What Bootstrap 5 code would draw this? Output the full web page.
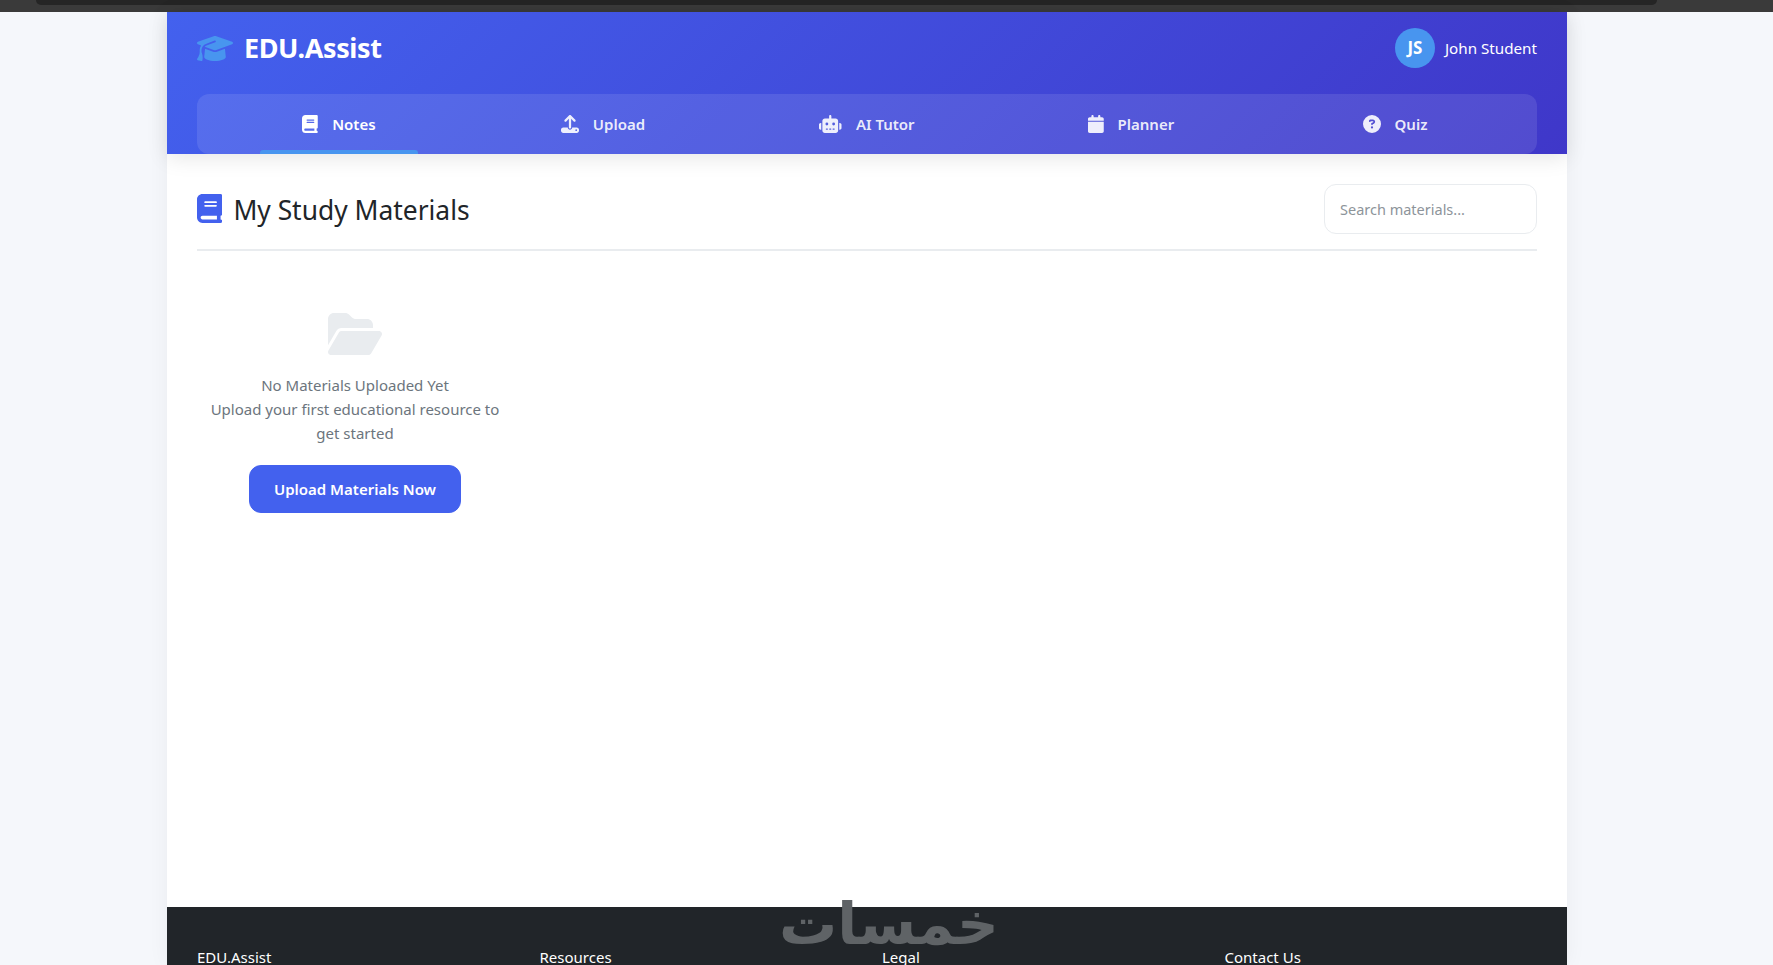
<!DOCTYPE html>
<html lang="en">
<head>
    <meta charset="utf-8">
    <title>EDU.Assist</title>
    <link href="https://cdn.jsdelivr.net/npm/bootstrap@5.3.0/dist/css/bootstrap.min.css" rel="stylesheet">
    <style>
        html, body {
            height: 965px;
            overflow: hidden;
        }

        body {
            background-color: #f5f7fb;
            color: #212529;
            font-family: "Noto Sans", "Open Sans", sans-serif;
        }

        .chrome-bar {
            height: 12px;
            background-color: #3a3a3a;
            padding: 0 116px 0 36px;
        }

        .chrome-tab {
            height: 5px;
            background-color: #252525;
            border-radius: 0 0 8px 8px;
        }

        .app-shell {
            width: 1400px;
            height: 953px;
            margin-left: 167px;
            background-color: #fff;
            box-shadow: 0 0 20px rgba(0, 0, 0, 0.05);
        }

        .app-header {
            height: 142px;
            padding: 16px 30px 0;
            color: #fff;
            background: linear-gradient(135deg, #4361ee, #3f37c9);
            box-shadow: 0 4px 20px rgba(0, 0, 0, 0.1);
            position: relative;
        }

        .brand-row {
            height: 66px;
        }

        .brand-block {
            gap: 11px;
        }

        .brand-icon {
            width: 36px;
            height: 29px;
            fill: #4895ef;
        }

        .brand-name {
            font-size: 27px;
            font-weight: 700;
            letter-spacing: -0.4px;
        }

        .user-block {
            gap: 10px;
        }

        .user-avatar {
            width: 40px;
            height: 40px;
            background-color: #4895ef;
            font-weight: 700;
            font-size: 17px;
        }

        .user-name {
            font-size: 15.2px;
            font-weight: 400;
        }

        .tab-strip {
            height: 60px;
            padding: 0 10px;
            background-color: rgba(255, 255, 255, 0.1);
            border-radius: 12px;
        }

        .tab-strip .nav-link {
            position: relative;
            gap: 14px;
            color: rgba(255, 255, 255, 0.9);
            font-size: 15px;
            font-weight: 600;
            padding: 0;
        }

        .tab-strip .nav-link.active {
            color: #fff;
        }

        .tab-strip .nav-link.active::after {
            content: "";
            position: absolute;
            left: 20%;
            bottom: 0;
            width: 60%;
            height: 4px;
            background-color: #4895ef;
            border-radius: 3px 3px 0 0;
        }

        .tab-icon {
            height: 18px;
            fill: currentColor;
        }

        .page-body {
            height: 753px;
            padding: 31px 30px 0;
        }

        .section-head {
            height: 66px;
            padding-bottom: 16px;
            border-bottom: 2px solid #e9ecef;
        }

        .section-title {
            gap: 11px;
            font-size: 26.4px;
            font-weight: 400;
            margin: 0;
            padding-top: 3px;
        }

        .title-icon {
            height: 29px;
            fill: #4361ee;
            margin-top: -4px;
        }

        .search-box {
            width: 213px;
            height: 50px;
            border: 1px solid #e9ecef;
            border-radius: 12px;
            padding: 0 15px;
            font-size: 14.5px;
        }

        .search-box::placeholder {
            color: #8d949a;
        }

        .empty-state {
            width: 316px;
            padding: 59px 10px 0;
            color: #6c757d;
            font-size: 15px;
            line-height: 24px;
        }

        .empty-icon {
            height: 48px;
            fill: #e9ecef;
            margin-bottom: 15px;
        }

        .upload-btn {
            height: 48px;
            padding: 0 24px;
            background-color: #4361ee;
            border-color: #4361ee;
            border-radius: 12px;
            font-size: 15px;
            font-weight: 600;
            margin-top: 20px;
        }

        .app-footer {
            height: 58px;
            background-color: #212529;
            color: #fff;
            padding: 38px 30px 0;
            position: relative;
        }

        .footer-row {
            --bs-gutter-x: 30px;
        }

        .footer-title {
            font-size: 15px;
            font-weight: 400;
            line-height: 24px;
            margin: 0;
        }

        .footer-mark {
            position: absolute;
            left: 612px;
            top: -1px;
            color: #5f6366;
            font-family: "DejaVu Sans", sans-serif;
            font-size: 58px;
            font-weight: 700;
            line-height: 36px;
        }
    </style>
</head>
<body>
<div class="chrome-bar">
    <div class="chrome-tab"></div>
</div>

<div class="app-shell d-flex flex-column">
    <header class="app-header">
        <div class="brand-row d-flex justify-content-between align-items-start">
            <div class="brand-block d-flex align-items-center">
                <svg class="brand-icon" viewBox="0 0 640 512"><path d="M320 32c-8.1 0-16.1 1.4-23.7 4.1L15.8 137.4C6.3 140.9 0 149.9 0 160s6.3 19.1 15.8 22.6l57.9 20.9C57.3 229.3 48 259.8 48 291.9v28.1c0 28.4-10.8 57.7-22.3 80.8c-6.5 13-13.9 25.8-22.5 37.6C0 442.7-.9 448.3 .9 453.4s6 8.9 11.2 10.2l64 16c4.2 1.1 8.7 .3 12.4-2s6.3-6.1 7.1-10.4c8.6-42.8 4.3-81.2-2.1-108.7C90.3 344.3 86 329.8 80 316.5V291.9c0-30.2 10.2-58.7 27.9-81.5c12.9-15.5 29.6-28 49.2-35.7l157-61.7c8.2-3.2 17.5 .8 20.7 9s-.8 17.5-9 20.7l-157 61.7c-12.4 4.9-23.3 12.4-32.2 21.6l159.6 57.6c7.6 2.7 15.6 4.1 23.7 4.1s16.1-1.4 23.7-4.1L624.2 182.6c9.5-3.4 15.8-12.5 15.8-22.6s-6.3-19.1-15.8-22.6L343.7 36.1C336.1 33.4 328.1 32 320 32zM128 408c0 35.3 86 72 192 72s192-36.7 192-72L496.7 262.6 354.5 314c-11.1 4-22.8 6-34.5 6s-23.5-2-34.5-6L143.3 262.6 128 408z"/></svg>
                <span class="brand-name">EDU.Assist</span>
            </div>
            <div class="user-block d-flex align-items-center">
                <div class="user-avatar rounded-circle d-flex align-items-center justify-content-center">JS</div>
                <span class="user-name">John Student</span>
            </div>
        </div>
        <nav class="tab-strip nav nav-justified">
            <a class="nav-link active d-flex align-items-center justify-content-center" href="#">
                <svg class="tab-icon" viewBox="0 0 448 512"><path d="M96 0C43 0 0 43 0 96V416c0 53 43 96 96 96H384h32c17.7 0 32-14.3 32-32s-14.3-32-32-32V384c17.7 0 32-14.3 32-32V32c0-17.7-14.3-32-32-32H384 96zm0 384H352v64H96c-17.7 0-32-14.3-32-32s14.3-32 32-32zm32-240c0-8.8 7.2-16 16-16H336c8.8 0 16 7.2 16 16s-7.2 16-16 16H144c-8.8 0-16-7.2-16-16zm16 48H336c8.8 0 16 7.2 16 16s-7.2 16-16 16H144c-8.8 0-16-7.2-16-16s7.2-16 16-16z"/></svg>
                Notes
            </a>
            <a class="nav-link d-flex align-items-center justify-content-center" href="#">
                <svg class="tab-icon" viewBox="0 0 512 512"><path d="M288 109.3V352c0 17.7-14.3 32-32 32s-32-14.3-32-32V109.3l-73.4 73.4c-12.5 12.5-32.8 12.5-45.3 0s-12.5-32.8 0-45.3l128-128c12.5-12.5 32.8-12.5 45.3 0l128 128c12.5 12.5 12.5 32.8 0 45.3s-32.8 12.5-45.3 0L288 109.3zM64 352H192c0 35.3 28.7 64 64 64s64-28.7 64-64H448c35.3 0 64 28.7 64 64v32c0 35.3-28.7 64-64 64H64c-35.3 0-64-28.7-64-64V416c0-35.3 28.7-64 64-64zM432 456a24 24 0 1 0 0-48 24 24 0 1 0 0 48z"/></svg>
                Upload
            </a>
            <a class="nav-link d-flex align-items-center justify-content-center" href="#">
                <svg class="tab-icon" viewBox="0 0 640 512"><path d="M320 0c17.7 0 32 14.3 32 32V96H472c39.8 0 72 32.2 72 72V440c0 39.8-32.2 72-72 72H168c-39.8 0-72-32.2-72-72V168c0-39.8 32.2-72 72-72H288V32c0-17.7 14.3-32 32-32zM208 384c-8.8 0-16 7.2-16 16s7.2 16 16 16h32c8.8 0 16-7.2 16-16s-7.2-16-16-16H208zm96 0c-8.8 0-16 7.2-16 16s7.2 16 16 16h32c8.8 0 16-7.2 16-16s-7.2-16-16-16H304zm96 0c-8.8 0-16 7.2-16 16s7.2 16 16 16h32c8.8 0 16-7.2 16-16s-7.2-16-16-16H400zM264 256a40 40 0 1 0 -80 0 40 40 0 1 0 80 0zm152 40a40 40 0 1 0 0-80 40 40 0 1 0 0 80zM48 224H64V416H48c-26.5 0-48-21.5-48-48V272c0-26.5 21.5-48 48-48zm544 0c26.5 0 48 21.5 48 48v96c0 26.5-21.5 48-48 48H576V224h16z"/></svg>
                AI Tutor
            </a>
            <a class="nav-link d-flex align-items-center justify-content-center" href="#">
                <svg class="tab-icon" viewBox="0 0 448 512"><path d="M96 32V64H48C21.5 64 0 85.5 0 112v48H448V112c0-26.5-21.5-48-48-48H352V32c0-17.7-14.3-32-32-32s-32 14.3-32 32V64H160V32c0-17.7-14.3-32-32-32S96 14.3 96 32zM448 192H0V464c0 26.5 21.5 48 48 48H400c26.5 0 48-21.5 48-48V192z"/></svg>
                Planner
            </a>
            <a class="nav-link d-flex align-items-center justify-content-center" href="#">
                <svg class="tab-icon" viewBox="0 0 512 512"><path d="M256 512A256 256 0 1 0 256 0a256 256 0 1 0 0 512zM169.8 165.3c7.9-22.3 29.1-37.3 52.8-37.3h58.3c34.9 0 63.1 28.3 63.1 63.1c0 22.6-12.1 43.5-31.7 54.8L280 264.4c-.2 13-10.9 23.6-24 23.6c-13.3 0-24-10.7-24-24V250.5c0-8.6 4.6-16.5 12.1-20.8l44.3-25.4c4.7-2.7 7.6-7.7 7.6-13.1c0-8.4-6.8-15.1-15.1-15.1H222.6c-3.4 0-6.4 2.1-7.5 5.3l-.4 1.2c-4.4 12.5-18.2 19-30.6 14.6s-19-18.2-14.6-30.6l.4-1.2zM224 352a32 32 0 1 1 64 0 32 32 0 1 1 -64 0z"/></svg>
                Quiz
            </a>
        </nav>
    </header>

    <main class="page-body">
        <div class="section-head d-flex justify-content-between align-items-center">
            <h2 class="section-title d-flex align-items-center">
                <svg class="title-icon" viewBox="0 0 448 512"><path d="M96 0C43 0 0 43 0 96V416c0 53 43 96 96 96H384h32c17.7 0 32-14.3 32-32s-14.3-32-32-32V384c17.7 0 32-14.3 32-32V32c0-17.7-14.3-32-32-32H384 96zm0 384H352v64H96c-17.7 0-32-14.3-32-32s14.3-32 32-32zm32-240c0-8.8 7.2-16 16-16H336c8.8 0 16 7.2 16 16s-7.2 16-16 16H144c-8.8 0-16-7.2-16-16zm16 48H336c8.8 0 16 7.2 16 16s-7.2 16-16 16H144c-8.8 0-16-7.2-16-16s7.2-16 16-16z"/></svg>
                My Study Materials
            </h2>
            <input class="search-box form-control" type="text" placeholder="Search materials...">
        </div>
        <div class="empty-state text-center">
            <svg class="empty-icon" viewBox="0 0 576 512"><path d="M88.7 223.8L0 375.8V96C0 60.7 28.7 32 64 32H181.5c17 0 33.3 6.7 45.3 18.7l26.5 26.5c12 12 28.3 18.7 45.3 18.7H416c35.3 0 64 28.7 64 64v32H144c-22.8 0-43.8 12.1-55.3 31.8zm27.6 16.1C122.1 230 132.6 224 144 224H544c11.5 0 22 6.1 27.7 16.1s5.7 22.2-.1 32.1l-112 192C453.9 474 443.4 480 432 480H32c-11.5 0-22-6.1-27.7-16.1s-5.7-22.2 .1-32.1l112-192z"/></svg>
            <div>No Materials Uploaded Yet<br>Upload your first educational resource to get started</div>
            <button class="upload-btn btn btn-primary" type="button">Upload Materials Now</button>
        </div>
    </main>

    <footer class="app-footer">
        <div class="footer-mark" lang="ar" dir="rtl">خمسات</div>
        <div class="footer-row row">
            <div class="col-3"><h5 class="footer-title">EDU.Assist</h5></div>
            <div class="col-3"><h5 class="footer-title">Resources</h5></div>
            <div class="col-3"><h5 class="footer-title">Legal</h5></div>
            <div class="col-3"><h5 class="footer-title">Contact Us</h5></div>
        </div>
    </footer>
</div>
<script src="https://cdn.jsdelivr.net/npm/bootstrap@5.3.0/dist/js/bootstrap.bundle.min.js"></script>
</body>
</html>
